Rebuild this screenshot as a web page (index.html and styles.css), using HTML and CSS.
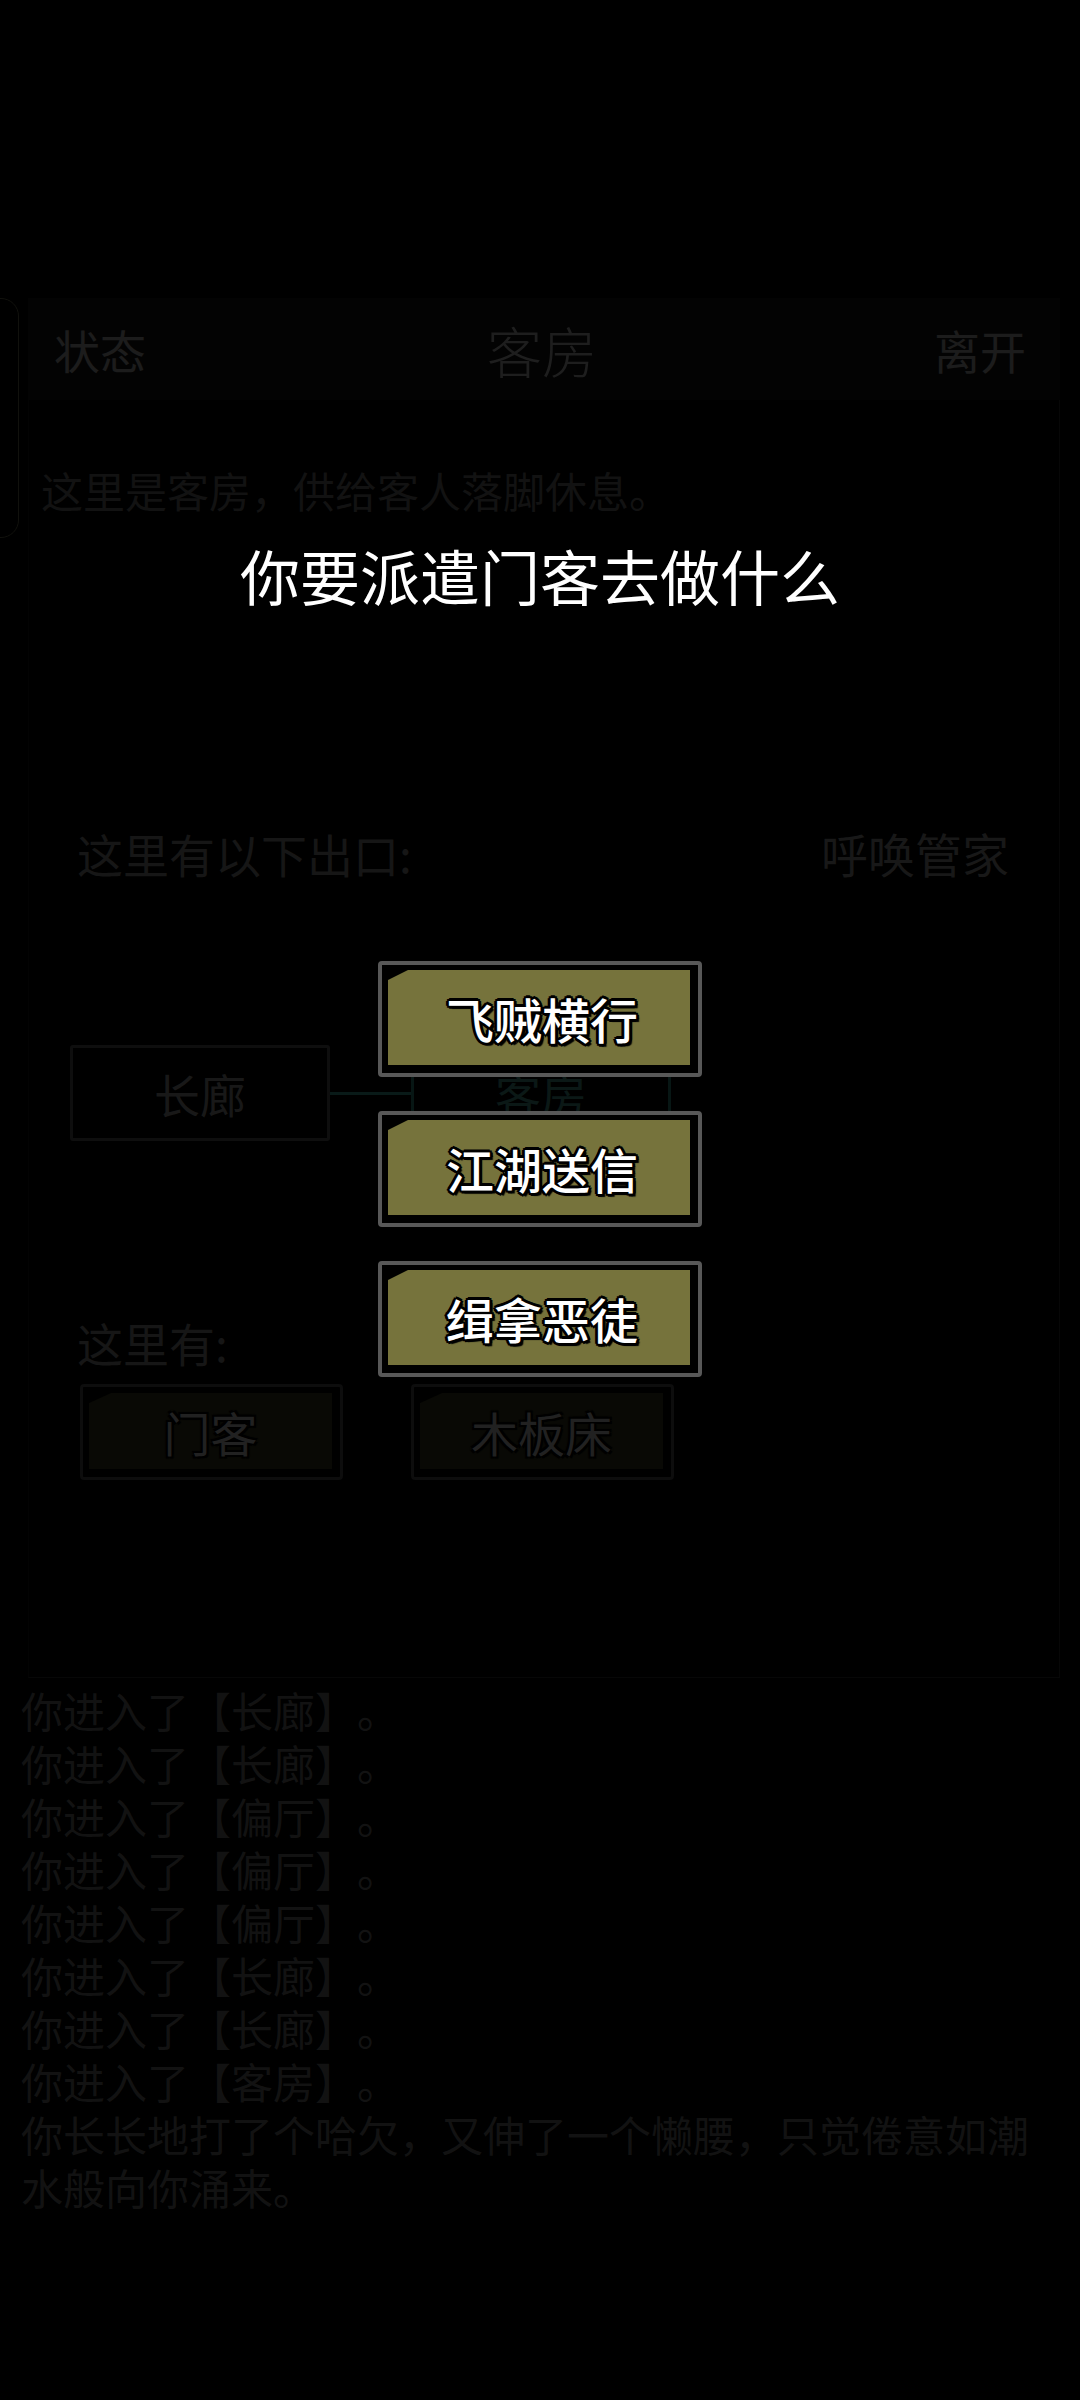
FILE: index.html
```html
<!DOCTYPE html>
<html lang="zh">
<head>
<meta charset="utf-8">
<title>客房</title>
<link rel="stylesheet" href="styles.css">
</head>
<body>
<div class="screen">
  <div class="side-tab"></div>
  <div class="top-space"></div>
  <header class="header">
    <span class="hdr-btn">状态</span>
    <span class="hdr-title">客房</span>
    <span class="hdr-btn">离开</span>
  </header>
  <main class="panel">
    <p class="desc">这里是客房，供给客人落脚休息。</p>
    <div class="exits-row">
      <span class="label">这里有以下出口:</span>
      <span class="call">呼唤管家</span>
    </div>
    <div class="map">
      <div class="room">长廊</div>
      <div class="link"></div>
      <div class="room current">客房</div>
    </div>
    <div class="label here">这里有:</div>
    <div class="items">
      <div class="item"><div class="item-in">门客</div></div>
      <div class="item"><div class="item-in">木板床</div></div>
    </div>
  </main>
  <section class="log">
    <p>你进入了【长廊】。</p>
    <p>你进入了【长廊】。</p>
    <p>你进入了【偏厅】。</p>
    <p>你进入了【偏厅】。</p>
    <p>你进入了【偏厅】。</p>
    <p>你进入了【长廊】。</p>
    <p>你进入了【长廊】。</p>
    <p>你进入了【客房】。</p>
    <p>你长长地打了个哈欠，又伸了一个懒腰，只觉倦意如潮水般向你涌来。</p>
  </section>

  <div class="overlay">
    <h2 class="modal-title">你要派遣门客去做什么</h2>
    <div class="choices">
      <button class="choice"><span class="choice-in">飞贼横行</span></button>
      <button class="choice"><span class="choice-in">江湖送信</span></button>
      <button class="choice"><span class="choice-in">缉拿恶徒</span></button>
    </div>
  </div>
</div>
</body>
</html>
```

FILE: styles.css
```css
* { box-sizing: border-box; }
html, body {
  margin: 0;
  padding: 0;
  background: #000;
}
body {
  width: 1080px;
  height: 2400px;
  overflow: hidden;
  font-family: "Noto Sans CJK SC", "Noto Sans", sans-serif;
  text-spacing-trim: space-all;
}
.screen {
  position: relative;
  width: 1080px;
  height: 2400px;
  background: #000;
}
.side-tab {
  position: absolute;
  left: -20px;
  top: 298px;
  width: 39px;
  height: 240px;
  border: 1px solid #1b1b14;
  border-radius: 0 18px 18px 0;
}
.top-space { height: 298px; }

.header {
  margin: 0 20px 0 28px;
  height: 102px;
  background: #060606;
  display: flex;
  align-items: center;
  justify-content: space-between;
  padding: 0 34px 0 26px;
}
.hdr-btn {
  font-size: 46px;
  color: #2c2c2c;
  line-height: 1;
}
.hdr-title {
  font-size: 55px;
  font-weight: 300;
  color: #2f2f2f;
  line-height: 1;
  margin-left: 4px;
}

.panel {
  margin: 0 20px 0 28px;
  height: 1278px;
  border-left: 1px solid #060606;
  border-right: 1px solid #0b0b0b;
  border-bottom: 1px solid #0c0c0c;
}
.desc {
  margin: 0;
  padding: 62px 0 0 12px;
  font-size: 42px;
  line-height: 56px;
  color: #1c1c1c;
}
.exits-row {
  display: flex;
  justify-content: space-between;
  align-items: center;
  margin-top: 305px;
  height: 60px;
  padding: 0 50px 0 48px;
}
.label {
  font-size: 46px;
  line-height: 60px;
  color: #222;
}
.call {
  font-size: 47px;
  line-height: 60px;
  color: #252525;
}
.map {
  display: flex;
  align-items: center;
  margin-top: 162px;
  padding-left: 41px;
}
.room {
  width: 260px;
  height: 96px;
  border: 3px solid #161616;
  border-radius: 3px;
  display: flex;
  align-items: center;
  justify-content: center;
  font-size: 46px;
  color: #262626;
}
.room.current {
  border-color: #0c2220;
  color: #112523;
}
.link {
  width: 81px;
  height: 3px;
  background: #0e2826;
}
.here {
  margin-top: 173px;
  padding-left: 48px;
  line-height: 56px;
}
.items {
  display: flex;
  gap: 68px;
  margin-top: 14px;
  padding-left: 51px;
}
.item {
  width: 263px;
  height: 96px;
  border: 3px solid #141414;
  border-radius: 4px;
  padding: 6px 8px 8px 6px;
}
.item-in {
  height: 100%;
  background: #0e0e08;
  clip-path: polygon(0 10px, 22px 0, 100% 0, 100% 100%, 0 100%);
  display: flex;
  align-items: center;
  justify-content: center;
  font-size: 47px;
  color: #333;
  text-shadow: 0 0 3px #000, 2px 2px 0 #000, -2px -2px 0 #000, 2px -2px 0 #000, -2px 2px 0 #000;
}

.log {
  padding: 5px 30px 0 21px;
}
.log p {
  margin: 0;
  font-size: 42px;
  line-height: 53px;
  color: #1d1d1d;
}

/* modal */
.overlay {
  position: absolute;
  inset: 0;
  background: rgba(0, 0, 0, 0.35);
  display: flex;
  flex-direction: column;
  align-items: center;
}
.modal-title {
  margin: 537px 0 0 0;
  font-size: 60px;
  line-height: 76px;
  font-weight: 400;
  color: #fff;
}
.choices {
  margin-top: 348px;
  display: flex;
  flex-direction: column;
  gap: 34px;
}
.choice {
  width: 324px;
  height: 116px;
  border: 4px solid #585858;
  border-radius: 4px;
  background: #000;
  padding: 5px 8px 8px 6px;
  margin: 0;
  display: block;
  cursor: pointer;
}
.choice-in {
  display: flex;
  width: 100%;
  height: 100%;
  align-items: center;
  justify-content: center;
  background: #76733c;
  clip-path: polygon(0 10px, 20px 0, 100% 0, 100% 100%, 0 100%);
  font-family: "Noto Sans CJK SC", "Noto Sans", sans-serif;
  font-size: 48px;
  font-weight: 500;
  color: #fff;
  padding-left: 6px;
  text-shadow:
    3px 0 0 #000, -3px 0 0 #000, 0 3px 0 #000, 0 -3px 0 #000,
    2px 2px 0 #000, -2px -2px 0 #000, 2px -2px 0 #000, -2px 2px 0 #000,
    3px 3px 1px #000;
}
```
